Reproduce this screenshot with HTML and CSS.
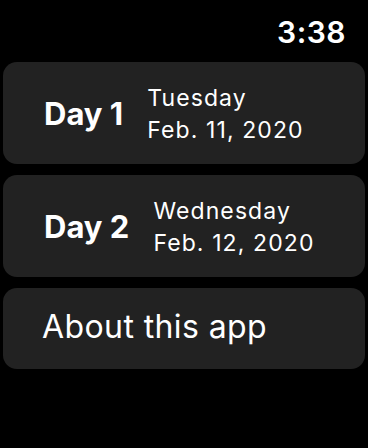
FILE: index.html
```html
<!DOCTYPE html>
<html lang="en">
<head>
    <meta charset="UTF-8">
    <meta name="viewport" content="width=device-width, initial-scale=1.0">
    <title>Schedule</title>
    <link rel="stylesheet" href="styles.css">
</head>
<body>

    <!-- Status bar -->
    <div class="statusbar">
        <span class="time">3:38</span>
    </div>

    <div class="list">
        <a class="row day-row" href="#day1">
            <span class="day">Day 1</span>
            <span class="date">
                <span>Tuesday</span>
                <span>Feb. 11, 2020</span>
            </span>
        </a>
        <a class="row day-row" href="#day2">
            <span class="day">Day 2</span>
            <span class="date">
                <span>Wednesday</span>
                <span>Feb. 12, 2020</span>
            </span>
        </a>
        <a class="row about-row" href="#about">About this app</a>
    </div>

</body>
</html>
```

FILE: styles.css
```css
body {
    font-family: 'Inter', 'Roboto', sans-serif;
    background-color: #000;
    color: white;
    margin: 0;
    padding: 0;
}

.statusbar {
    display: flex;
    justify-content: flex-end;
    height: 62px;
    padding-right: 22px;
    box-sizing: border-box;
    padding-top: 14px;
}

.time {
    font-size: 30px;
    font-weight: 600;
    line-height: 36px;
    letter-spacing: 0.5px;
}

.list {
    display: flex;
    flex-direction: column;
    gap: 11px;
    padding: 0 3px;
}

.row {
    display: flex;
    align-items: center;
    background-color: #222;
    border-radius: 14px;
    color: white;
    text-decoration: none;
    box-sizing: border-box;
}

.day-row {
    height: 102px;
    padding-left: 41px;
    gap: 24px;
}

.day {
    font-size: 31px;
    font-weight: 700;
}

.date {
    display: flex;
    flex-direction: column;
    font-size: 23px;
    line-height: 32px;
    letter-spacing: 1.1px;
    padding-top: 2px;
}

.about-row {
    height: 81px;
    padding-left: 39px;
    font-size: 32px;
    letter-spacing: 0.4px;
    padding-bottom: 4px;
}
```
